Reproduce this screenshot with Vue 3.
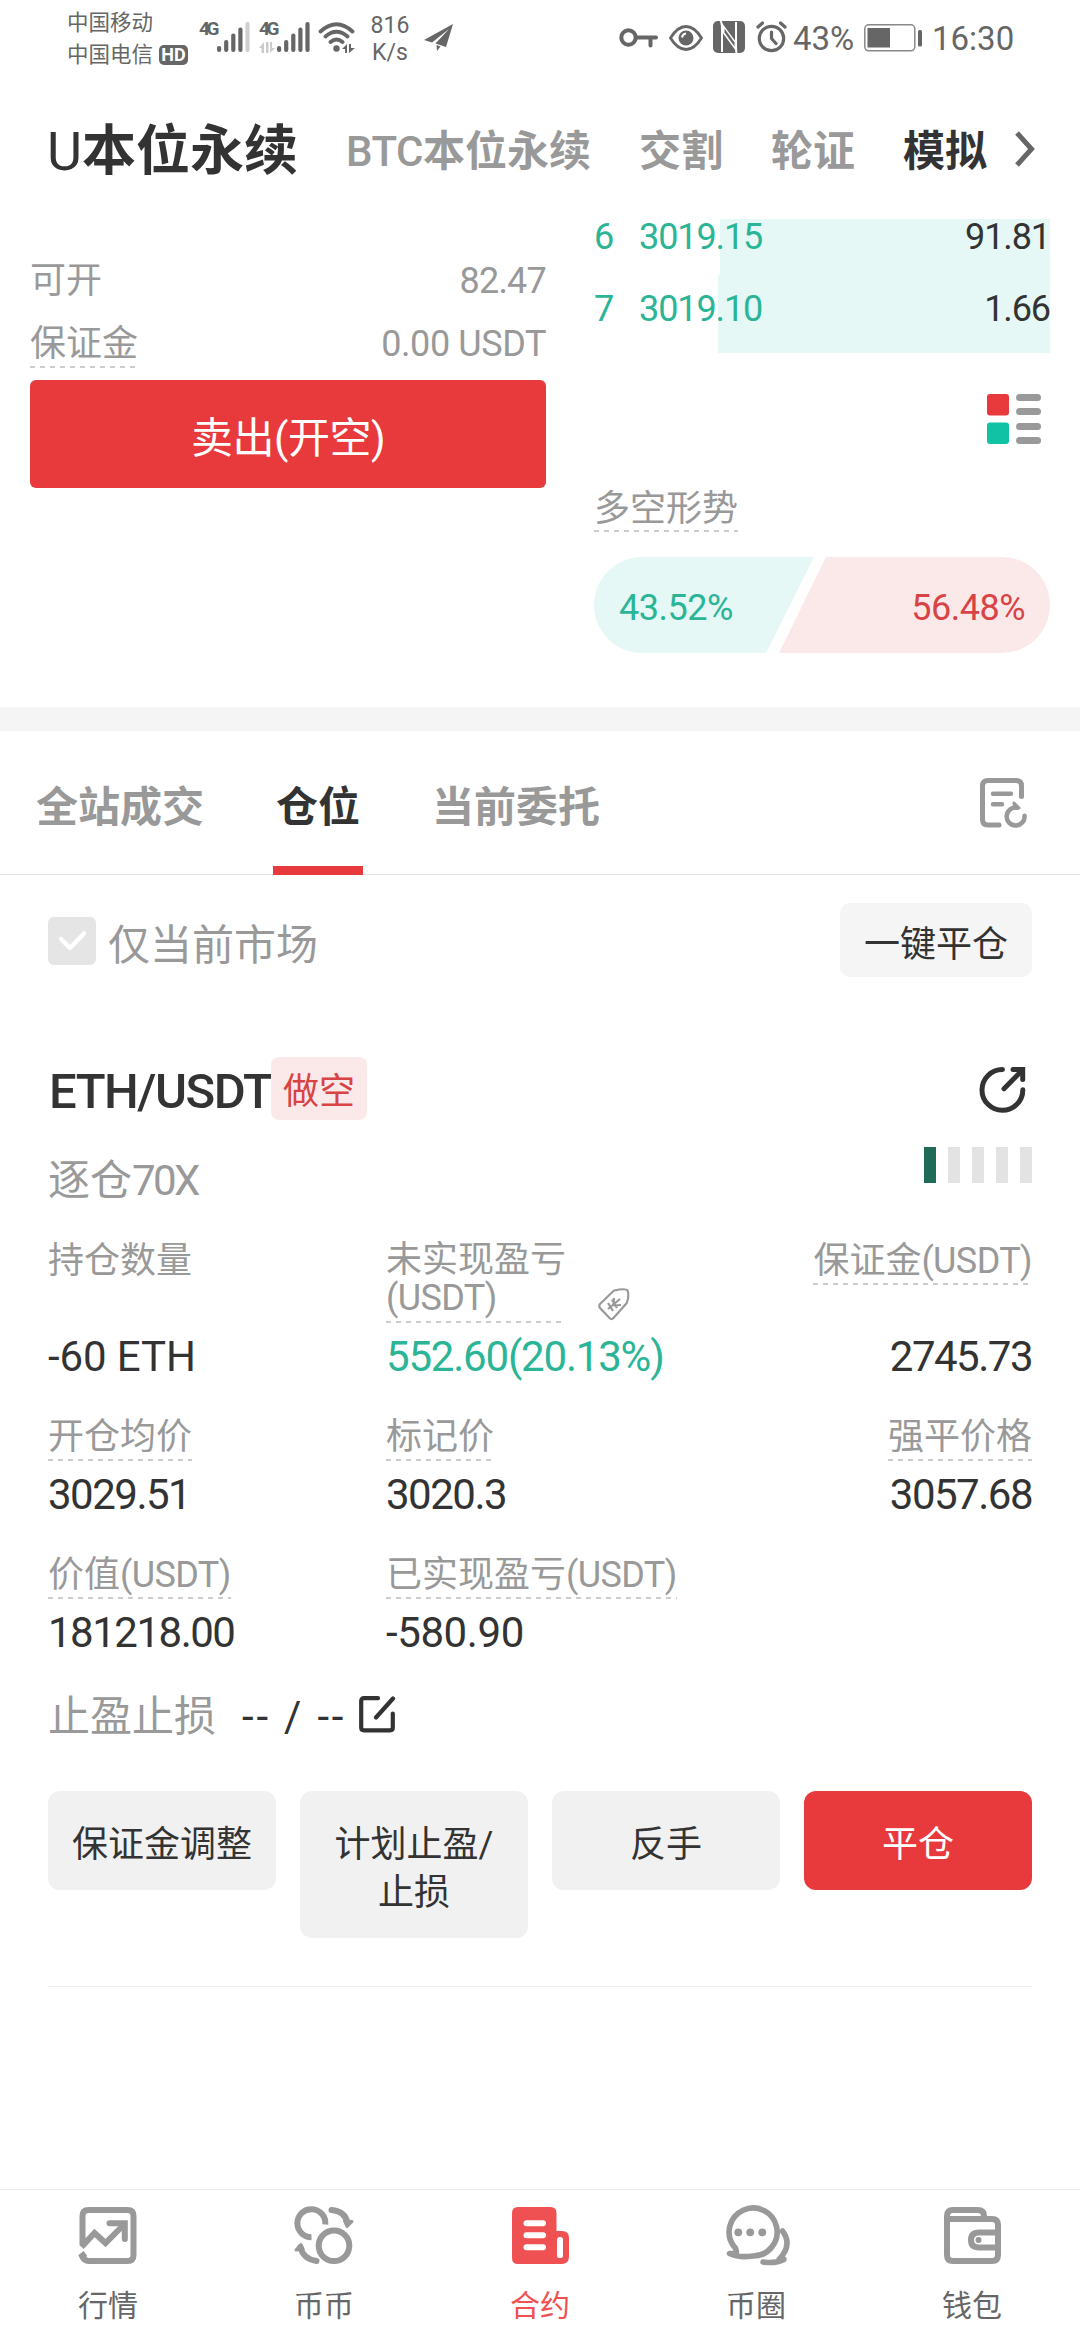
<script setup>
const marketTabs = [
  { latin: 'U', label: '本位永续', kind: 'current' },
  { latin: 'BTC', label: '本位永续', kind: '' },
  { latin: '', label: '交割', kind: '' },
  { latin: '', label: '轮证', kind: '' },
  { latin: '', label: '模拟', kind: 'dark' },
]
const bids = [
  { level: 6, price: '3019.15', amount: '91.81', depth: 330 },
  { level: 7, price: '3019.10', amount: '1.66', depth: 332 },
]
const actions = [
  { label: '保证金调整' },
  { label: '计划止盈/止损' },
  { label: '反手' },
  { label: '平仓', primary: true },
]
const signalBars = [
  { x: 0, y: 24 }, { x: 7.1, y: 18 }, { x: 14.2, y: 11.5 }, { x: 21.3, y: 5.5 }, { x: 28.4, y: 0 },
]
</script>

<template>
  <div class="screen">
    <div class="status">
      <div class="carriers">
        <div>中国移动</div>
        <div class="carrier-row">中国电信<span class="hd">HD</span></div>
      </div>
      <div class="cell first">
        <span class="gen">4G</span>
        <svg width="33" height="30" viewBox="0 0 33 30">
          <rect v-for="(b, i) in signalBars" :key="i" :x="b.x" :y="b.y" width="4.2" :height="30 - b.y" rx="2" :fill="i === 4 ? '#d0d0d0' : '#666'" />
        </svg>
      </div>
      <div class="cell second">
        <span class="gen">4G
          <svg class="updown" width="16" height="11" viewBox="0 0 16 11" fill="#ccc"><path d="M0 6L5 0V11H2.500V6ZM7 0H9.500V11H7ZM11 0H13V6H16L11 11Z" /></svg>
        </span>
        <svg width="33" height="30" viewBox="0 0 33 30" fill="#666">
          <rect v-for="(b, i) in signalBars" :key="i" :x="b.x" :y="b.y" width="4.2" :height="30 - b.y" rx="2" />
        </svg>
      </div>
      <svg class="wifi" width="38" height="31" viewBox="0 0 38 31" fill="none" stroke="#666" stroke-width="3.800" stroke-linecap="round">
        <path d="M2.500 9.500Q18.500-5 34.500 9.500M7.500 14.500Q18.500 5 29.500 14.500M12.500 20Q18.500 15 24.500 20" />
        <circle cx="18.500" cy="26.500" r="3.200" fill="#666" stroke="none" />
        <path d="M24 27L29 22V31H27V27ZM31 22H33V26H37L31 31Z" fill="#666" stroke="none" />
      </svg>
      <div class="speed"><div>816</div><div>K/s</div></div>
      <svg class="plane" width="29" height="28" viewBox="0 0 29 28" fill="#666"><path d="M29 0L0 16L8 18.500L25 5L11.500 19.500L22 23ZM12.500 21L16.500 22.500L13 27Z" /></svg>
      <svg class="key" width="39" height="20" viewBox="0 0 39 20" fill="none" stroke="#666" stroke-width="4">
        <circle cx="9.500" cy="9.500" r="7.200" /><path d="M17 9.500H37M31.500 9.500V17.500" stroke-linecap="round" />
      </svg>
      <svg class="eye" width="34" height="26" viewBox="0 0 34 26">
        <path d="M1.500 13Q8.500 1.500 17 1.500T32.500 13Q25.500 24.500 17 24.500T1.500 13Z" fill="none" stroke="#666" stroke-width="2.800" />
        <circle cx="17" cy="13" r="7.500" fill="#666" /><path d="M13 12.500Q13.500 9 17 8.500" fill="none" stroke="#fff" stroke-width="2" />
      </svg>
      <svg class="nfc" width="32" height="32" viewBox="0 0 32 32">
        <rect width="32" height="32" rx="5" fill="#666" />
        <path d="M7.500 0Q9 2 9 8V31M23.500 32Q23 30 23 24V1" fill="none" stroke="#fff" stroke-width="2" />
        <path d="M9 2L23 21V30L9 11Z" fill="#fff" /><path d="M11.500 7.500L21.500 21.500V25.500L11.500 11.500Z" fill="#666" />
      </svg>
      <svg class="alarm" width="31" height="32" viewBox="0 0 31 32" fill="none" stroke="#666" stroke-width="3.200" stroke-linecap="round">
        <circle cx="15.500" cy="17.500" r="12.200" /><path d="M15.500 11V17.500L20 22.500M2 6L6.500 2M29 6L24.500 2" />
      </svg>
      <span class="pct">43%</span>
      <svg class="battery" width="58" height="28" viewBox="0 0 58 28">
        <rect x=".8" y=".8" width="50" height="26" rx="4" fill="none" stroke="#888" stroke-width="1.500" />
        <rect x="3.500" y="4" width="22.500" height="19.500" fill="#666" /><rect x="54" y="6" width="4" height="16.500" rx="1.500" fill="#666" />
      </svg>
      <span class="clock">16:30</span>
    </div>

    <nav class="markets">
      <span v-for="tab in marketTabs" :key="tab.latin + tab.label" class="market" :class="tab.kind"><i v-if="tab.latin">{{ tab.latin }}</i>{{ tab.label }}</span>
      <svg class="chevron" width="20" height="36" viewBox="0 0 20 36" fill="none" stroke="#666" stroke-width="5"><path d="M2 2L16.500 18L2 34" /></svg>
    </nav>

    <section class="trade">
      <div class="order">
        <div class="line"><span>可开</span><span class="num">82.47</span></div>
        <div class="line margin-line"><span class="hint">保证金</span><span class="num usdt">0.00 USDT</span></div>
        <button class="sell">卖出(开空)</button>
      </div>
      <div class="book">
        <div v-for="bid in bids" :key="bid.level" class="bid">
          <div class="depth" :style="{ width: bid.depth + 'px' }"></div>
          <span class="level">{{ bid.level }}</span><span class="price">{{ bid.price }}</span><span class="amount">{{ bid.amount }}</span>
        </div>
        <svg class="mode" width="54" height="50" viewBox="0 0 54 50">
          <rect width="22" height="21.500" rx="3" fill="#e8393c" /><rect y="28.500" width="22" height="21.500" rx="3" fill="#12c2a4" />
          <g fill="#999"><rect x="29" width="25" height="7" rx="3.500" /><rect x="29" y="14" width="25" height="7" rx="3.500" /><rect x="29" y="29" width="25" height="7" rx="3.500" /><rect x="29" y="43" width="25" height="7" rx="3.500" /></g>
        </svg>
        <span class="hint trend">多空形势</span>
        <div class="ratio">
          <div class="long">43.52%</div>
          <div class="short">56.48%</div>
        </div>
      </div>
    </section>

    <div class="tabs">
      <span class="tab">全站成交</span><span class="tab active">仓位</span><span class="tab">当前委托</span>
      <svg class="orders" width="48" height="51" viewBox="0 0 48 51" fill="none" stroke="#999" stroke-width="5" stroke-linecap="round">
        <path d="M41.500 18.500V8Q41.500 2.500 36 2.500H8Q2.500 2.500 2.500 8V41.500Q2.500 47 8 47H19" />
        <path d="M13 15.800H31M13 26.300H22" stroke-width="4.500" />
        <path d="M44.600 37.700A9 9 0 1 1 37 29.600" stroke-width="4.500" /><path d="M34 25L39 30L35 30.500Z" fill="#999" stroke-width="3" stroke-linejoin="round" />
      </svg>
    </div>

    <div class="filter">
      <svg width="48" height="48" viewBox="0 0 48 48"><rect width="48" height="48" rx="6" fill="#e5e5e5" /><path d="M13 22L22 31L36 16.500" fill="none" stroke="#fff" stroke-width="4.500" stroke-linecap="round" stroke-linejoin="round" /></svg>
      <span>仅当前市场</span>
      <button class="close-all">一键平仓</button>
    </div>

    <section class="position">
      <div class="title-row">
        <span class="pair">ETH/USDT</span><span class="side">做空</span>
        <svg class="share" width="47" height="47" viewBox="0 0 47 47" fill="none" stroke="#333" stroke-width="5" stroke-linecap="round">
          <path d="M23.500 2.500A20.400 20.400 0 1 0 43.800 22.800M25 21.700L43 3.500" /><path d="M34 2.500H43.700V12.500" />
        </svg>
      </div>
      <div class="lever-row">
        <span>逐仓<i>70X</i></span>
        <div class="gauge"><b v-for="n in 5" :key="n" :class="{ on: n === 1 }"></b></div>
      </div>
      <div class="grid first-grid">
        <div class="stat"><div class="label"><span>持仓数量</span></div><div class="value eth">-60 ETH</div></div>
        <div class="stat">
          <div class="label"><span class="hint pnl">未实现盈亏<br /><i>(USDT)</i></span>
            <svg class="tag" width="32" height="33" viewBox="0 0 32 33" fill="none" stroke="#999" stroke-width="2.200" stroke-linejoin="round">
              <path d="M16 2.500Q28 .2 29.500 2.500Q31.500 7 28.800 15L15.500 30Q13.500 32 11.500 30L2 20Q.5 18 2 16Z" />
              <path d="M10 21L22 11M10 15L15 23M14 11.500L19 20M15.500 17.500L16 10M15.500 17.500L23 17" />
            </svg>
          </div>
          <div class="value green">552.60(20.13%)</div>
        </div>
        <div class="stat right"><div class="label"><span class="hint">保证金<i>(USDT)</i></span></div><div class="value">2745.73</div></div>
      </div>
      <div class="grid">
        <div class="stat"><div class="label"><span class="hint">开仓均价</span></div><div class="value">3029.51</div></div>
        <div class="stat"><div class="label"><span class="hint">标记价</span></div><div class="value">3020.3</div></div>
        <div class="stat right"><div class="label"><span class="hint">强平价格</span></div><div class="value">3057.68</div></div>
      </div>
      <div class="grid">
        <div class="stat"><div class="label"><span class="hint">价值<i>(USDT)</i></span></div><div class="value">181218.00</div></div>
        <div class="stat"><div class="label"><span class="hint">已实现盈亏<i>(USDT)</i></span></div><div class="value realized">-580.90</div></div>
      </div>
      <div class="stops">
        <span class="stops-label">止盈止损</span><span class="dashes">-- / --</span>
        <svg width="37" height="37" viewBox="0 0 37 37" fill="none" stroke="#333" stroke-width="4.200" stroke-linecap="round">
          <path d="M19 2.200H5Q2.200 2.200 2.200 5V31.500Q2.200 34.300 5 34.300H31Q33.800 34.300 33.800 31.500V17.500M17 21.500L34 2.500" />
        </svg>
      </div>
      <div class="actions">
        <button v-for="a in actions" :key="a.label" :class="{ primary: a.primary }">{{ a.label }}</button>
      </div>
    </section>

    <footer class="bottom">
      <div class="item">
        <svg width="60" height="62" viewBox="-1.500 -2 60 62" fill="none" stroke="#999" stroke-width="6">
          <path d="M3 38V9Q3 3 9 3H48Q54 3 54 9V48Q54 54 48 54H9Q4.500 54 2.500 49L6 46.500M2 40L15 26L26 36L45 17" /><path d="M30 16.300H45.300V32" stroke-linecap="round" />
        </svg><span>行情</span>
      </div>
      <div class="item">
        <svg width="60" height="62" viewBox="0 -2 60 62" fill="none" stroke="#999" stroke-width="6">
          <circle cx="40" cy="38.700" r="15.300" /><path d="M17.500 30.200A14 14 0 1 1 31.300 17.500" /><path d="M37.500 3Q51 4 53.500 16M22.500 54Q9 52 6.500 40" stroke-linecap="round" />
          <path d="M50.500 14L58 14.500L53 19.500ZM2 43L7 37.500L9 42Z" fill="#999" stroke-width="3" stroke-linejoin="round" />
        </svg><span>币币</span>
      </div>
      <div class="item on">
        <svg width="57" height="62" viewBox="0 -2 57 62">
          <path d="M6 0H38.500Q44.500 0 44.500 6V24H50Q57 24 57 31V49.500Q57 57 49.500 57H6Q0 57 0 51V6Q0 0 6 0Z" fill="#ef5052" />
          <g fill="#fff"><rect x="11.500" y="13.300" width="22.500" height="6" rx="3" /><rect x="11.500" y="25.300" width="22.500" height="6" rx="3" /><rect x="11.500" y="37.300" width="22.500" height="6" rx="3" /><rect x="45" y="30" width="6" height="21" rx="2.500" /></g>
        </svg><span>合约</span>
      </div>
      <div class="item">
        <svg width="67" height="62" viewBox="0 0 67 62" fill="none" stroke="#999" stroke-width="6" stroke-linecap="round" stroke-linejoin="round">
          <path d="M6.500 48.500Q15 49 13 45.500Q13 43 11 41.500A24 24 0 1 1 30 51Q16 53 6.500 48.500Z" stroke-width="5.600" />
          <path d="M59.500 26Q70 40 56 54.500L61 54.500Q52 59 40 57" stroke-width="5.500" />
          <g fill="#999" stroke="none"><circle cx="15.300" cy="27.300" r="3.900" /><circle cx="27.200" cy="27.300" r="3.900" /><circle cx="39.300" cy="27.300" r="3.900" /></g>
        </svg><span>币圈</span>
      </div>
      <div class="item">
        <svg width="57" height="62" viewBox="0 -2 57 62" fill="none" stroke="#999" stroke-width="6">
          <path d="M3 14V9Q3 3 9 3H33.500Q40 3 40 9V12M3 12H48Q54 12 54 18V48Q54 54 48 54H9Q3 54 3 48V9" /><path d="M54 25.500H35Q27 25.500 27 33T35 40.500H54" /><circle cx="34.500" cy="33" r="3" fill="#999" stroke="none" />
        </svg><span>钱包</span>
      </div>
    </footer>
  </div>
</template>

<style>
body { background: #fff; overflow: hidden; }
</style>

<style scoped>
.screen { width: 1080px; height: 2340px; display: flex; flex-direction: column; background: #fff; color: #333; font-family: Roboto, "Noto Sans CJK SC", sans-serif; font-size: 36px; line-height: 40px; overflow: hidden; }
.screen * { box-sizing: border-box; }
svg { display: block; flex: none; }
i { font-style: normal; }
button { border: 0; margin: 0; font: inherit; color: inherit; }

.status { height: 76px; flex: none; display: flex; align-items: flex-start; color: #666; white-space: nowrap; }
.carriers { margin: 7px 0 0 67px; width: 122px; font-size: 21.500px; line-height: 32px; }
.carrier-row { display: flex; align-items: center; }
.hd { margin-left: 6px; width: 29px; height: 20px; border-radius: 5px; background: #666; color: #fff; font-size: 18px; font-weight: 700; line-height: 20px; text-align: center; }
.cell { display: flex; margin-top: 22px; }
.gen { position: relative; font-size: 19px; font-weight: 700; line-height: 14px; letter-spacing: -3.500px; }
.updown { position: absolute; left: 0; top: 20px; }
.first { margin-left: 10px; width: 60px; }
.first .gen { width: 18px; }
.second { width: 59px; }
.second .gen { width: 18px; }
.wifi { margin: 22px 0 0; }
.speed { margin: 12px 0 0 12px; width: 44px; font-size: 23px; line-height: 27px; text-align: center; }
.plane { margin: 24px 0 0 12px; }
.key { margin: 28px 0 0 166px; }
.eye { margin: 25px 0 0 11px; }
.nfc { margin: 21px 0 0 10px; }
.alarm { margin: 21px 0 0 11px; }
.pct { margin: 19px 0 0 6px; width: 63px; font-size: 33px; letter-spacing: 0; }
.battery { margin: 24px 0 0 8px; }
.clock { margin: 19px 0 0 10px; font-size: 33px; }

.markets { height: 143px; flex: none; display: flex; align-items: center; padding: 8px 0 0 47px; font-size: 42px; font-weight: 700; color: #999; white-space: nowrap; }
.market { margin-right: 48px; }
.market i { font-weight: 500; letter-spacing: -.5px; }
.market.current { font-size: 54px; color: #333; }
.market.current i { font-weight: 400; letter-spacing: 0; }
.market.dark { color: #333; margin-right: 28px; }
.chevron { margin-top: -5px; }

.trade { height: 488px; flex: none; display: flex; justify-content: space-between; padding: 0 30px; }
.order { width: 516px; color: #999; padding-top: 42px; }
.line { display: flex; justify-content: space-between; height: 63px; }
.margin-line { height: 56px; align-items: flex-start; }
.num { letter-spacing: -.8px; }
.usdt { letter-spacing: -.4px; }
.hint { padding-bottom: 4px; background: repeating-linear-gradient(90deg, #ccc 0 5px, transparent 5px 10px) left bottom / 100% 2px no-repeat; }
.sell { display: block; width: 516px; height: 108px; border-radius: 6px; background: #e8393c; color: #fff; font-size: 42px; line-height: 100px; padding: 9px 0 0; letter-spacing: -.5px; }
.book { width: 456px; display: flex; flex-direction: column; align-items: flex-start; }
.bid { position: relative; width: 100%; height: 78px; display: flex; padding-top: 14px; letter-spacing: -1.100px; color: #2bb596; }
.bid:first-child { height: 56px; padding-top: 0; line-height: 36px; }
.depth { position: absolute; right: 0; top: 0; bottom: 0; background: #e5f8f5; }
.bid span { position: relative; }
.level { width: 45px; }
.amount { margin-left: auto; color: #333; }
.mode { margin: 41px 0 0 393px; }
.trend { margin-top: 45px; padding-bottom: 3px; color: #999; }
.ratio { margin-top: 25px; width: 456px; height: 96px; border-radius: 48px; overflow: hidden; display: flex; line-height: 102px; letter-spacing: -.5px; }
.long { width: 220px; flex: none; padding-left: 25px; background: #e5f8f5; color: #2bb596; clip-path: polygon(0 0, 220px 0, 172px 100%, 0 100%); }
.short { width: 271px; flex: none; margin-left: -35px; padding-right: 25px; text-align: right; background: #fbe9e9; color: #d84345; clip-path: polygon(47px 0, 100% 0, 100% 100%, 0 100%); }

.tabs { height: 168px; flex: none; border-top: 24px solid #f5f5f5; border-bottom: 1px solid #e3e3e3; display: flex; align-items: stretch; padding: 0 52px 0 36px; font-size: 42px; font-weight: 700; line-height: 154px; color: #999; }
.tab { margin-right: 69px; height: 144px; }
.tab.active { color: #333; padding: 0 3px; margin: 0 66px 0 0; box-shadow: inset 0 -9px #e8393c; }
.tab:last-of-type { margin-left: 3px; }
.orders { margin: 47px 0 0 auto; }

.filter { height: 138px; flex: none; display: flex; align-items: flex-start; padding: 42px 48px 0; color: #999; font-size: 42px; line-height: 57px; }
.filter span { margin-left: 12px; }
.close-all { margin: -14px 0 0 auto; width: 192px; height: 74px; border-radius: 10px; background: #f5f5f5; color: #333; font-size: 36px; line-height: 72px; padding: 6px 0 0; }

.position { padding: 0 48px; flex: 1; }
.title-row { display: flex; height: 107px; padding-top: 44px; align-items: flex-start; }
.pair { font-size: 49px; font-weight: 500; line-height: 69px; letter-spacing: -1.500px; width: 223px; padding-left: 1px; white-space: nowrap; }
.side { width: 96px; height: 63px; border-radius: 8px; background: #fbe9e9; color: #d84345; line-height: 71px; text-align: center; }
.share { margin: 10px 6px 0 auto; }
.lever-row { display: flex; justify-content: space-between; height: 116px; padding-top: 27px; font-size: 42px; line-height: 68px; color: #999; }
.lever-row i { letter-spacing: -2.600px; }
.gauge { display: flex; gap: 12px; }
.gauge b { width: 12px; height: 36px; background: #e3e3e3; }
.gauge b.on { background: #206a58; }

.grid { display: grid; grid-template-columns: 338px 402px 244px; height: 138px; padding-top: 3px; }
.label { height: 56px; display: flex; align-items: flex-start; color: #999; line-height: 40px; white-space: nowrap; }
.label i { letter-spacing: -.6px; }
.value { font-size: 42px; line-height: 44px; letter-spacing: -1.500px; white-space: nowrap; }
.value.eth { letter-spacing: -.1px; }
.value.realized { letter-spacing: -.4px; }
.value.green { color: #2bb596; letter-spacing: -1.200px; }
.stat.right { text-align: right; }
.right .label { justify-content: flex-end; }
.first-grid { height: 178px; padding-top: 5px; }
.first-grid .label { height: 94px; }
.pnl { width: 178px; line-height: 38px; padding-bottom: 6px; }
.tag { margin: 47px 0 0 34px; }

.stops { display: flex; align-items: center; height: 78px; font-size: 42px; margin-top: -12px; }
.stops-label { color: #999; width: 194px; }
.dashes { width: 117px; letter-spacing: 2.800px; white-space: nowrap; }
.stops svg { margin-top: -6px; }
.actions { display: flex; gap: 24px; align-items: flex-start; padding-bottom: 48px; margin-top: 35px; border-bottom: 1px solid #eee; }
.actions button { width: 228px; min-height: 99px; padding: 30px 20px 21px; border-radius: 12px; background: #f1f1f1; line-height: 48px; }
.actions .primary { background: #e8393c; color: #fff; }

.bottom { height: 151px; flex: none; border-top: 1px solid #eaeaea; display: flex; }
.item { flex: 1; display: flex; flex-direction: column; align-items: center; padding-top: 15px; font-size: 30px; line-height: 40px; color: #666; }
.item span { margin-top: 19px; }
.item.on { color: #ef5052; }
</style>
